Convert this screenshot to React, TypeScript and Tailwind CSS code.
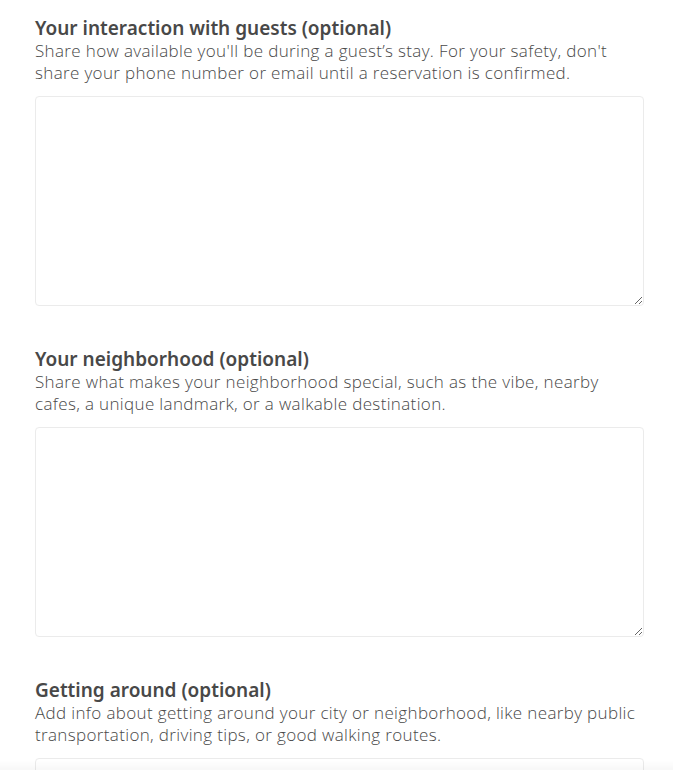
const sections = [
  {
    title: 'Your interaction with guests (optional)',
    lines: ["Share how available you'll be during a guest’s stay. For your safety, don't", 'share your phone number or email until a reservation is confirmed.'],
  },
  {
    title: 'Your neighborhood (optional)',
    lines: ['Share what makes your neighborhood special, such as the vibe, nearby', 'cafes, a unique landmark, or a walkable destination.'],
  },
  {
    title: 'Getting around (optional)',
    lines: ['Add info about getting around your city or neighborhood, like nearby public', 'transportation, driving tips, or good walking routes.'],
  },
];

export default function App() {
  return (
    <div className="min-h-[770px] bg-white px-[35px] pt-4 font-['Noto_Sans',sans-serif] text-[#484848]">
      {sections.map((s) => (
        <div key={s.title} className="mb-[41px]">
          <h2 className="text-[19px] font-semibold leading-6">{s.title}</h2>
          <p className="whitespace-nowrap font-['Open_Sans',sans-serif] text-[17px] font-light leading-[22px] tracking-[0.35px] text-[#484848]">
            {s.lines[0]}
            <br />
            {s.lines[1]}
          </p>
          <textarea className="mt-3 block h-[210px] w-[609px] rounded border border-[#ebebeb] bg-white outline-none" />
        </div>
      ))}
      <div className="pointer-events-none fixed inset-x-0 bottom-0 h-[10px] bg-gradient-to-b from-transparent to-black/[0.03]" />
    </div>
  );
}
